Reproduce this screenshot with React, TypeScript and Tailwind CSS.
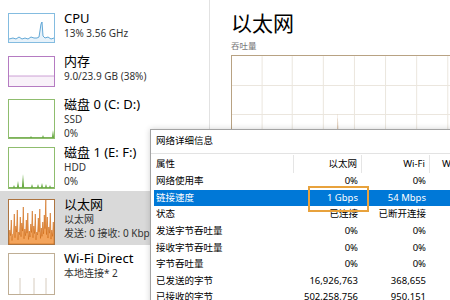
import React from "react";

type Row = { name: string; eth: string; wifi: string; active?: boolean };

const rows: Row[] = [
  { name: "网络使用率", eth: "0%", wifi: "0%" },
  { name: "链接速度", eth: "1 Gbps", wifi: "54 Mbps", active: true },
  { name: "状态", eth: "已连接", wifi: "已断开连接" },
  { name: "发送字节吞吐量", eth: "0%", wifi: "0%" },
  { name: "接收字节吞吐量", eth: "0%", wifi: "0%" },
  { name: "字节吞吐量", eth: "0%", wifi: "0%" },
  { name: "已发送的字节", eth: "16,926,763", wifi: "368,655" },
  { name: "已接收的字节", eth: "502,258,756", wifi: "950,151" },
];

const ethHeights = [
  14, 24, 10, 30, 18, 34, 12, 27, 21, 37, 15, 24, 31, 13, 20, 33, 18, 30, 12,
  26, 35, 16, 22, 29, 44, 27, 17, 31, 14, 22,
];

function spikes(heights: number[], w: number, h: number) {
  const step = w / heights.length;
  const pts = [`0,${h}`];
  heights.forEach((v, i) => {
    pts.push(`${(i * step).toFixed(1)},${h - v * 0.35}`);
    pts.push(`${(i * step + step / 2).toFixed(1)},${h - v}`);
  });
  pts.push(`${w},${h}`);
  return pts.join(" ");
}

function CpuThumb() {
  return (
    <svg viewBox="0 0 45 28" preserveAspectRatio="none" className="h-full w-full">
      <polygon
        points="0,28 0,25 4,24 7,25 10,23 13,25 16,24 19,25 22,23 25,24 28,24 30,23 32,10 33,8 34,22 36,24 39,23 42,25 45,24 45,28"
        fill="#e7f2fa"
      />
      <polyline
        points="0,25 4,24 7,25 10,23 13,25 16,24 19,25 22,23 25,24 28,24 30,23 32,10 33,8 34,22 36,24 39,23 42,25 45,24"
        fill="none"
        stroke="#3d93cc"
        strokeWidth="0.8"
      />
    </svg>
  );
}

function MemThumb() {
  return (
    <svg viewBox="0 0 45 29" preserveAspectRatio="none" className="h-full w-full">
      <rect x="0" y="19" width="45" height="10" fill="#f8f1f9" />
      <line x1="0" y1="19" x2="45" y2="19" stroke="#c08acb" strokeWidth="0.8" />
    </svg>
  );
}

function DiskThumb({ peaks, h }: { peaks: [number, number][]; h: number }) {
  return (
    <svg viewBox={`0 0 45 ${h}`} preserveAspectRatio="none" className="h-full w-full">
      <line x1="0" y1={h - 0.5} x2="45" y2={h - 0.5} stroke="#7db35a" strokeWidth="1" />
      {peaks.map(([x, v], i) => (
        <polygon
          key={i}
          points={`${x - 1.2},${h} ${x},${h - v} ${x + 1.2},${h}`}
          fill="#6aab45"
        />
      ))}
    </svg>
  );
}

function EthThumb() {
  return (
    <svg viewBox="0 0 45 44" preserveAspectRatio="none" className="h-full w-full">
      <polygon
        points={spikes(ethHeights, 45, 44)}
        fill="#f3a45c"
        stroke="#cf6a14"
        strokeWidth="0.6"
      />
    </svg>
  );
}

function WifiThumb() {
  return (
    <svg viewBox="0 0 45 40" preserveAspectRatio="none" className="h-full w-full">
      <line x1="11" y1="24" x2="11" y2="40" stroke="#cbbfae" strokeWidth="0.8" />
      <line x1="25" y1="24" x2="25" y2="40" stroke="#cbbfae" strokeWidth="0.8" />
      <line x1="37" y1="24" x2="37" y2="40" stroke="#cbbfae" strokeWidth="0.8" />
    </svg>
  );
}

function SideItem({
  className,
  boxClass,
  thumb,
  title,
  lines,
}: {
  className: string;
  boxClass: string;
  thumb: React.ReactNode;
  title: string;
  lines: string[];
}) {
  return (
    <div className={`flex gap-[9px] pl-[8px] ${className}`}>
      <div className={`w-[47px] shrink-0 border ${boxClass}`}>{thumb}</div>
      <div className="-mt-[3px] whitespace-nowrap">
        <div className="text-[13px] leading-[16px] text-black">{title}</div>
        {lines.map((l) => (
          <div key={l} className="text-[10px] leading-[14px] text-[#333]">
            {l}
          </div>
        ))}
      </div>
    </div>
  );
}

function Sidebar() {
  return (
    <aside className="flex w-[210px] shrink-0 flex-col border-r border-[#e2e2e2]">
      <SideItem
        className="h-[52px] pt-[13px]"
        boxClass="h-[30px] border-[#84bce0]"
        thumb={<CpuThumb />}
        title="CPU"
        lines={["13% 3.56 GHz"]}
      />
      <SideItem
        className="h-[47px] pt-[8px]"
        boxClass="h-[31px] border-[#b57bc2]"
        thumb={<MemThumb />}
        title="内存"
        lines={["9.0/23.9 GB (38%)"]}
      />
      <SideItem
        className="h-[56px] pt-[8px]"
        boxClass="h-[40px] border-[#8fbd6e]"
        thumb={<DiskThumb h={38} peaks={[[22, 2], [34, 3], [44, 8]]} />}
        title="磁盘 0 (C: D:)"
        lines={["SSD", "0%"]}
      />
      <SideItem
        className="h-[55px] pt-[5px]"
        boxClass="h-[42px] border-[#8fbd6e]"
        thumb={
          <DiskThumb
            h={40}
            peaks={[
              [5, 3],
              [9, 7],
              [14, 14],
              [23, 4],
              [29, 4],
              [33, 5],
              [37, 4],
              [41, 3],
            ]}
          />
        }
        title="磁盘 1 (E: F:)"
        lines={["HDD", "0%"]}
      />
      <SideItem
        className="h-[57px] bg-[#d9d9d9] pt-[8px]"
        boxClass="h-[46px] border-[#ad7440] bg-white"
        thumb={<EthThumb />}
        title="以太网"
        lines={["以太网", "发送: 0 接收: 0 Kbps"]}
      />
      <SideItem
        className="h-[60px] pt-[8px]"
        boxClass="h-[42px] border-[#bfae95]"
        thumb={<WifiThumb />}
        title="Wi-Fi Direct"
        lines={["本地连接* 2"]}
      />
    </aside>
  );
}

function Throughput() {
  const vx = [30, 60, 91, 122, 153, 184, 215, 246];
  const hy = [29, 58, 87, 116];
  return (
    <div className="h-[120px] w-[280px] border-[1.5px] border-[#b8a283]">
      <svg viewBox="0 0 277 117" className="h-full w-full">
        {vx.map((x) => (
          <line key={x} x1={x} y1="0" x2={x} y2="117" stroke="#ebe6de" strokeWidth="1" />
        ))}
        {hy.map((y) => (
          <line key={y} x1="0" y1={y} x2="277" y2={y} stroke="#ebe6de" strokeWidth="1" />
        ))}
        <polygon points="104.5,117 105.5,56 106.5,117" fill="#a5703b" />
      </svg>
    </div>
  );
}

function Details() {
  return (
    <div className="absolute left-[150px] top-[129px] h-[200px] w-[340px] border border-[#a3a3a3] bg-white text-[9.5px] text-black shadow-[0_0_6px_rgba(0,0,0,0.18)]">
      <div className="flex h-[24px] items-center border-b border-[#e3e3e3] px-[5px]">网络详细信息</div>
      <div className="pl-[3px] pt-[1px]">
        <div className="flex h-[18px] items-center">
          <div className="flex h-full w-[140px] shrink-0 items-center border-r border-[#e5e5e5] pl-[2px]">属性</div>
          <div className="flex h-full w-[68px] shrink-0 items-center justify-end border-r border-[#e5e5e5] pr-[4px]">以太网</div>
          <div className="flex h-full w-[68px] shrink-0 items-center justify-end border-r border-[#e5e5e5] pr-[4px]">Wi-Fi</div>
          <div className="flex h-full w-[80px] shrink-0 items-center whitespace-nowrap pl-[12px]">Wi-Fi Direct</div>
        </div>
        {rows.map((r) => (
          <div
            key={r.name}
            className={`flex h-[16.6px] items-center whitespace-nowrap ${
              r.active ? "bg-[#0078d7] text-white" : ""
            }`}
          >
            <div className="w-[140px] shrink-0 pl-[2px]">{r.name}</div>
            <div className="w-[68px] shrink-0 pr-[4px] text-right">{r.eth}</div>
            <div className="w-[68px] shrink-0 pr-[4px] text-right">{r.wifi}</div>
          </div>
        ))}
      </div>
    </div>
  );
}

export default function App() {
  return (
    <div className="relative flex h-[300px] w-[450px] overflow-hidden bg-white font-['Noto_Sans','Noto_Sans_CJK_SC',sans-serif]">
      <Sidebar />
      <main className="flex-1 overflow-hidden pl-[21px] pt-[11px]">
        <h1 className="text-[21px] leading-[24px] text-black">以太网</h1>
        <div className="mt-[6px] text-[8.5px] leading-[10px] text-[#777]">吞吐量</div>
        <div className="mt-[4px]">
          <Throughput />
        </div>
      </main>
      <Details />
      <div className="absolute left-[308px] top-[186px] h-[26px] w-[61px] border-2 border-[#e8a23c]" />
    </div>
  );
}
